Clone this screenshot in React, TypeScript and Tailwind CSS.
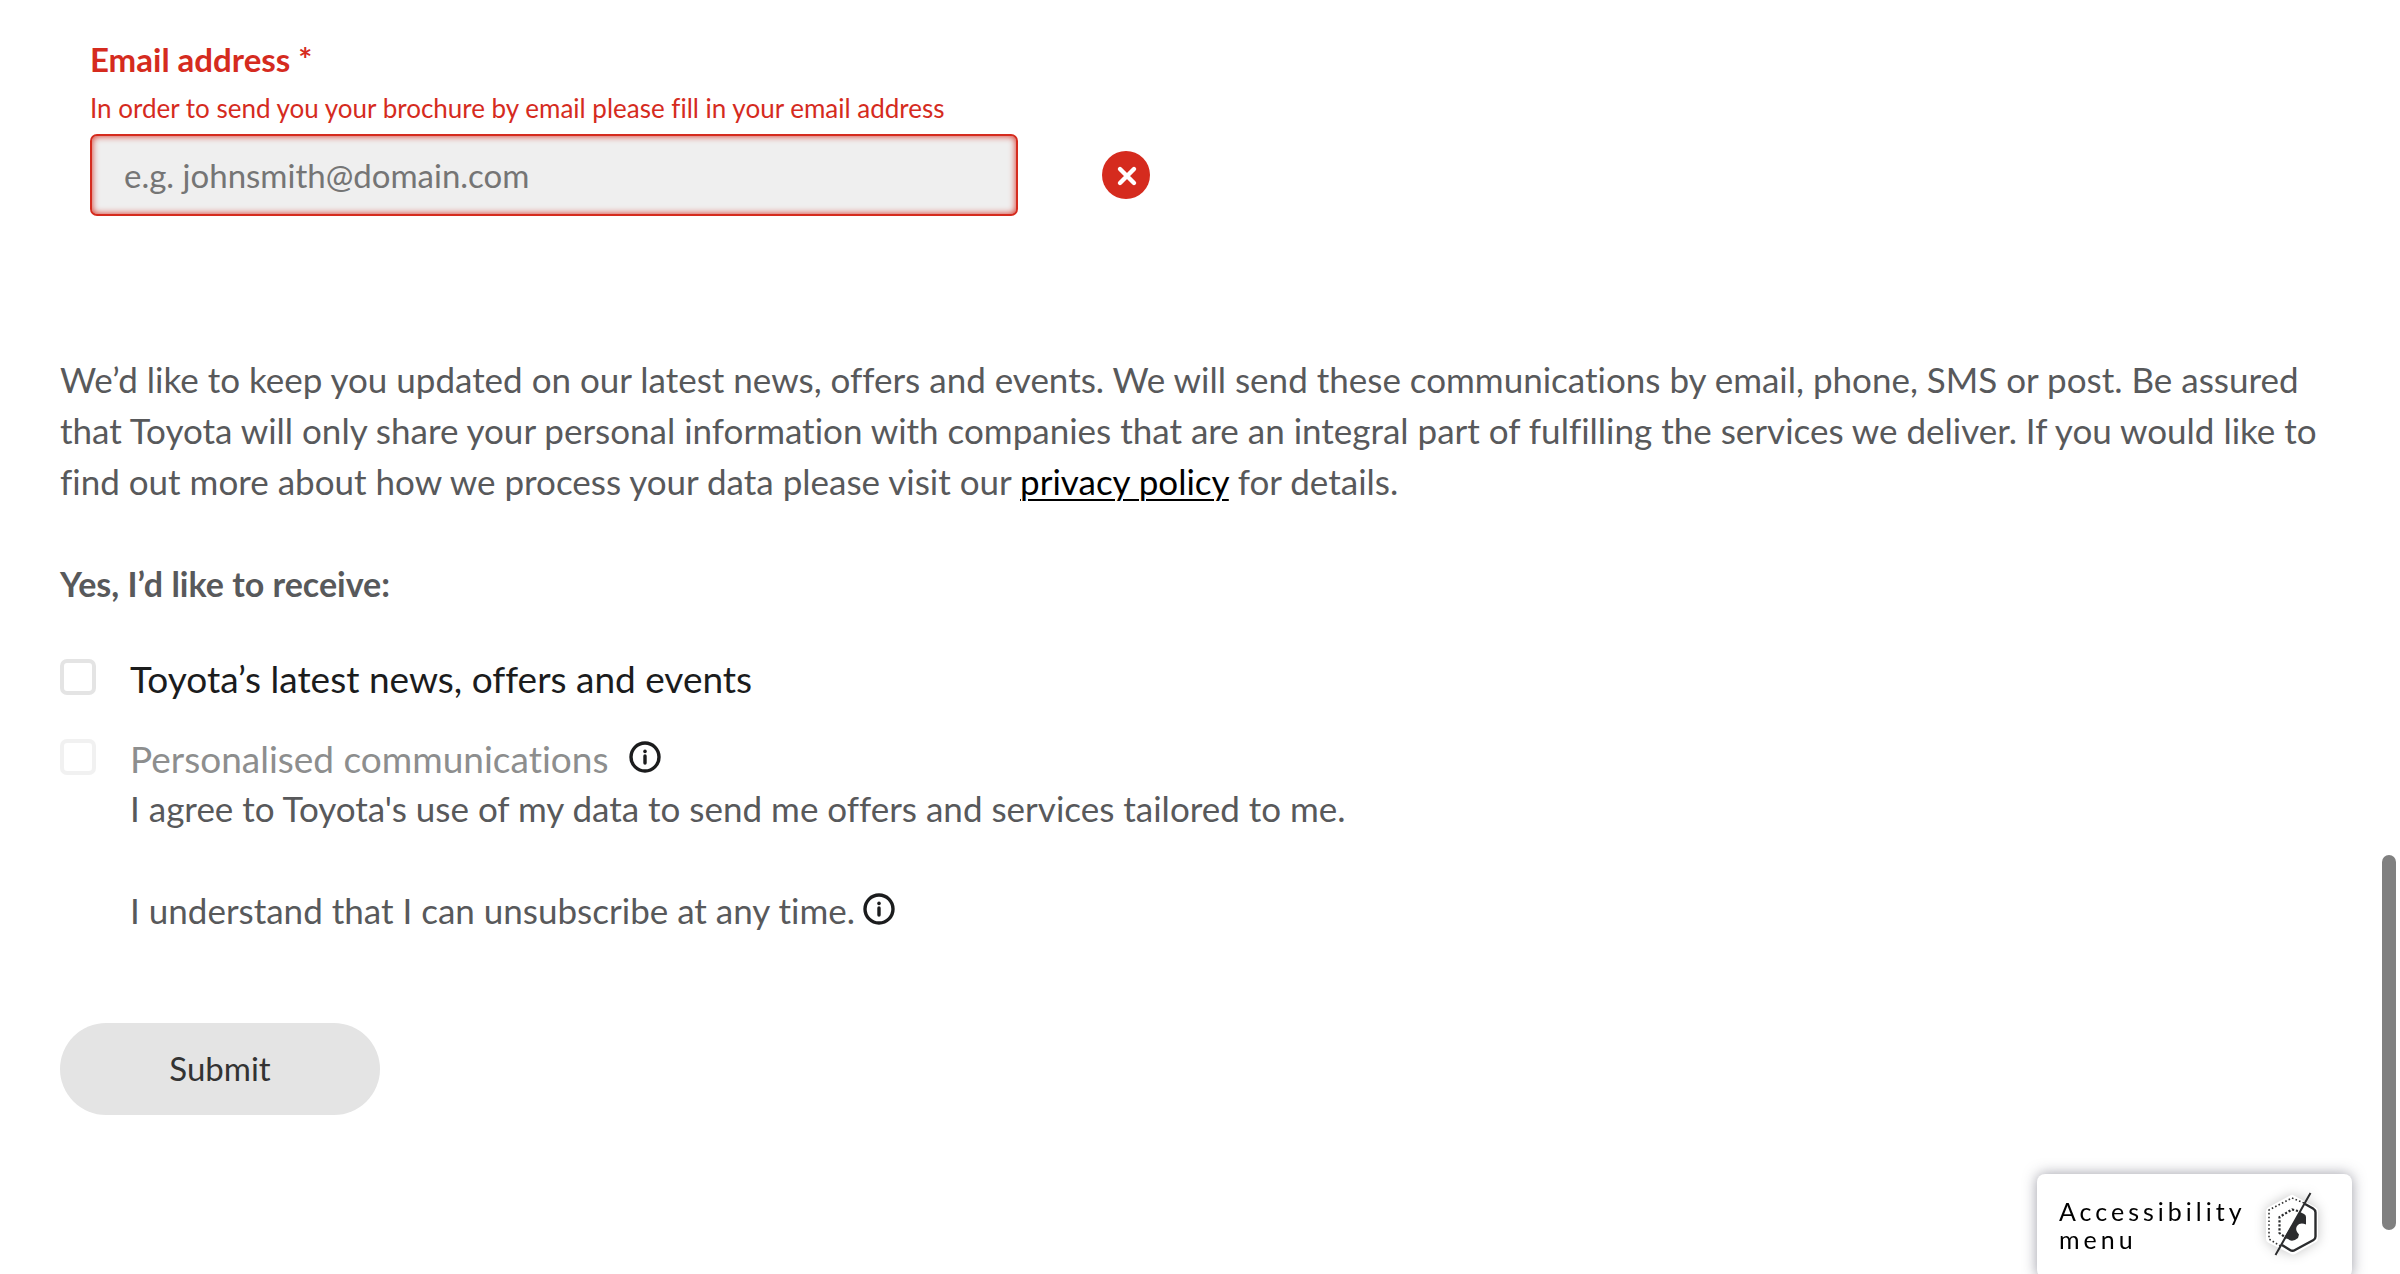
function InfoIcon() {
  return (
    <svg viewBox="0 0 32 32" className="size-8" aria-hidden="true">
      <circle cx="16" cy="16" r="14" fill="none" stroke="#1b1c1d" strokeWidth="3.4" />
      <circle cx="16" cy="10.4" r="1.8" fill="#1b1c1d" />
      <path d="M16 15v7" stroke="#1b1c1d" strokeWidth="3.4" strokeLinecap="round" />
    </svg>
  );
}

function ErrorIcon() {
  return (
    <svg viewBox="0 0 48 48" className="size-12" role="img" aria-label="Invalid">
      <circle cx="24" cy="24" r="24" fill="#d52b1e" />
      <path d="M18 18l14 14M32 18l-14 14" stroke="#fff" strokeWidth="4.4" strokeLinecap="round" />
    </svg>
  );
}

function AccessibilityIcon() {
  return (
    <svg
      viewBox="0 0 60 72"
      className="h-[72px] w-[60px] shrink-0 [filter:drop-shadow(0_0_6px_rgba(0,0,0,0.22))]"
      aria-hidden="true"
    >
      <path d="M31 5Q30 4.500 29 5L6 17.500Q4 19 4 21V49Q4 51 6 52.500L29 64Q31 65 33 64L54 52Q56 51 56 48V21Q56 18.500 54 17.500Z" fill="#fff" />
      <path d="M42 13L30 8L7 20V49L20 57" fill="none" stroke="#333" strokeWidth="1.6" strokeDasharray="1.6 2.2" />
      <path d="M36 21L30 19.500L17.500 27V43L24 48" fill="none" stroke="#2b2c2e" strokeWidth="2.2" strokeDasharray="2.200 1.800" />
      <path d="M43 14L51 18.500Q53.500 20 53.500 22.500V46.500Q53.500 49 51.500 50L33 60Q30.500 61.500 28 60L20 55" fill="none" stroke="#2b2c2e" strokeWidth="2.4" />
      <path d="M38 22L42 24Q44 25 44 27V34.500Q38 32 35 36Q32.500 40 37 44.500L36 48Q30 53 26 49L22 48Z" fill="#2b2c2e" />
      <path d="M48.500 3L13.500 65" stroke="#2b2c2e" strokeWidth="2" />
    </svg>
  );
}

const box = "size-9 shrink-0 appearance-none rounded-[7px] border-4 border-[#e4e4e4] bg-white disabled:opacity-50";

export default function App() {
  return (
    <main className="relative min-h-screen overflow-hidden bg-white font-[Lato,sans-serif] text-[#58595b] [font-variant-ligatures:no-common-ligatures]">
      <form className="px-[60px] pt-9" onSubmit={(e) => e.preventDefault()}>
        <div className="px-[30px] text-[#d52b1e]">
          <label htmlFor="email" className="block text-[33px] leading-[46px] font-bold">
            Email address *
          </label>
          <p id="email-error" className="mt-2 text-[26px] leading-9">
            In order to send you your brochure by email please fill in your email address
          </p>
          <div className="mt-2 flex items-center gap-[84px]">
            <input
              id="email"
              type="email"
              aria-invalid="true"
              aria-describedby="email-error"
              placeholder="e.g. johnsmith@domain.com"
              className="h-[82px] w-2/5 max-w-[928px] grow rounded-[7px] border-2 border-[#d52b1e] bg-[#efefef] px-8 text-[33px] text-[#58595b] shadow-[inset_0_0_7px_#d52b1e] outline-none placeholder:text-[#757575]"
            />
            <ErrorIcon />
          </div>
        </div>

        <p className="mt-[138px] text-[35px] leading-[51px]">
          We’d like to keep you updated on our latest news, offers and events. We will send these communications by
          email, phone, SMS or post. Be assured that Toyota will only share your personal information with companies
          that are an integral part of fulfilling the services we deliver. If you would like to find out more about how
          we process your data please visit our{" "}
          <a href="#privacy" className="text-black underline decoration-2 underline-offset-4">
            privacy policy
          </a>{" "}
          for details.
        </p>
        <p className="mt-[51px] text-[34px] leading-[51px] font-bold">Yes, I’d like to receive:</p>

        <div className="mt-10 flex items-center gap-[34px]">
          <input id="news" type="checkbox" className={box} />
          <label htmlFor="news" className="pt-1 text-[37px] leading-[52px] text-[#1b1c1d]">
            Toyota’s latest news, offers and events
          </label>
        </div>
        <div className="mt-6 flex items-center gap-[34px]">
          <input id="personal" type="checkbox" disabled className={box} />
          <div className="flex items-center gap-[21px]">
            <label htmlFor="personal" className="pt-1 text-[37px] leading-[52px] text-[#8d8e8e]">
              Personalised communications
            </label>
            <button type="button" aria-label="About personalised communications">
              <InfoIcon />
            </button>
          </div>
        </div>
        <div className="-mt-0.5 pl-[70px] text-[35px] leading-[51px]">
          <p>I agree to Toyota's use of my data to send me offers and services tailored to me.</p>
          <div className="mt-[51px] flex items-center gap-2">
            <p>I understand that I can unsubscribe at any time.</p>
            <button type="button" aria-label="About unsubscribing" className="pb-1">
              <InfoIcon />
            </button>
          </div>
        </div>

        <button
          type="submit"
          className="mt-[87px] block h-[92px] w-80 rounded-full bg-[#e4e4e4] text-[33px] text-[#333]"
        >
          Submit
        </button>
      </form>

      <button
        type="button"
        className="fixed right-12 -bottom-1 flex h-[104px] w-[315px] items-center justify-between rounded-lg bg-white pr-[30px] pl-[22px] text-left text-[25px] leading-7 tracking-[4px] text-black shadow-[0_0_14px_rgba(60,60,80,0.5)]"
      >
        <span className="pb-0.5">
          Accessibility
          <br />
          menu
        </span>
        <AccessibilityIcon />
      </button>
      <div className="fixed right-1 bottom-11 h-[375px] w-3.5 rounded-full bg-[#808080]" />
    </main>
  );
}
